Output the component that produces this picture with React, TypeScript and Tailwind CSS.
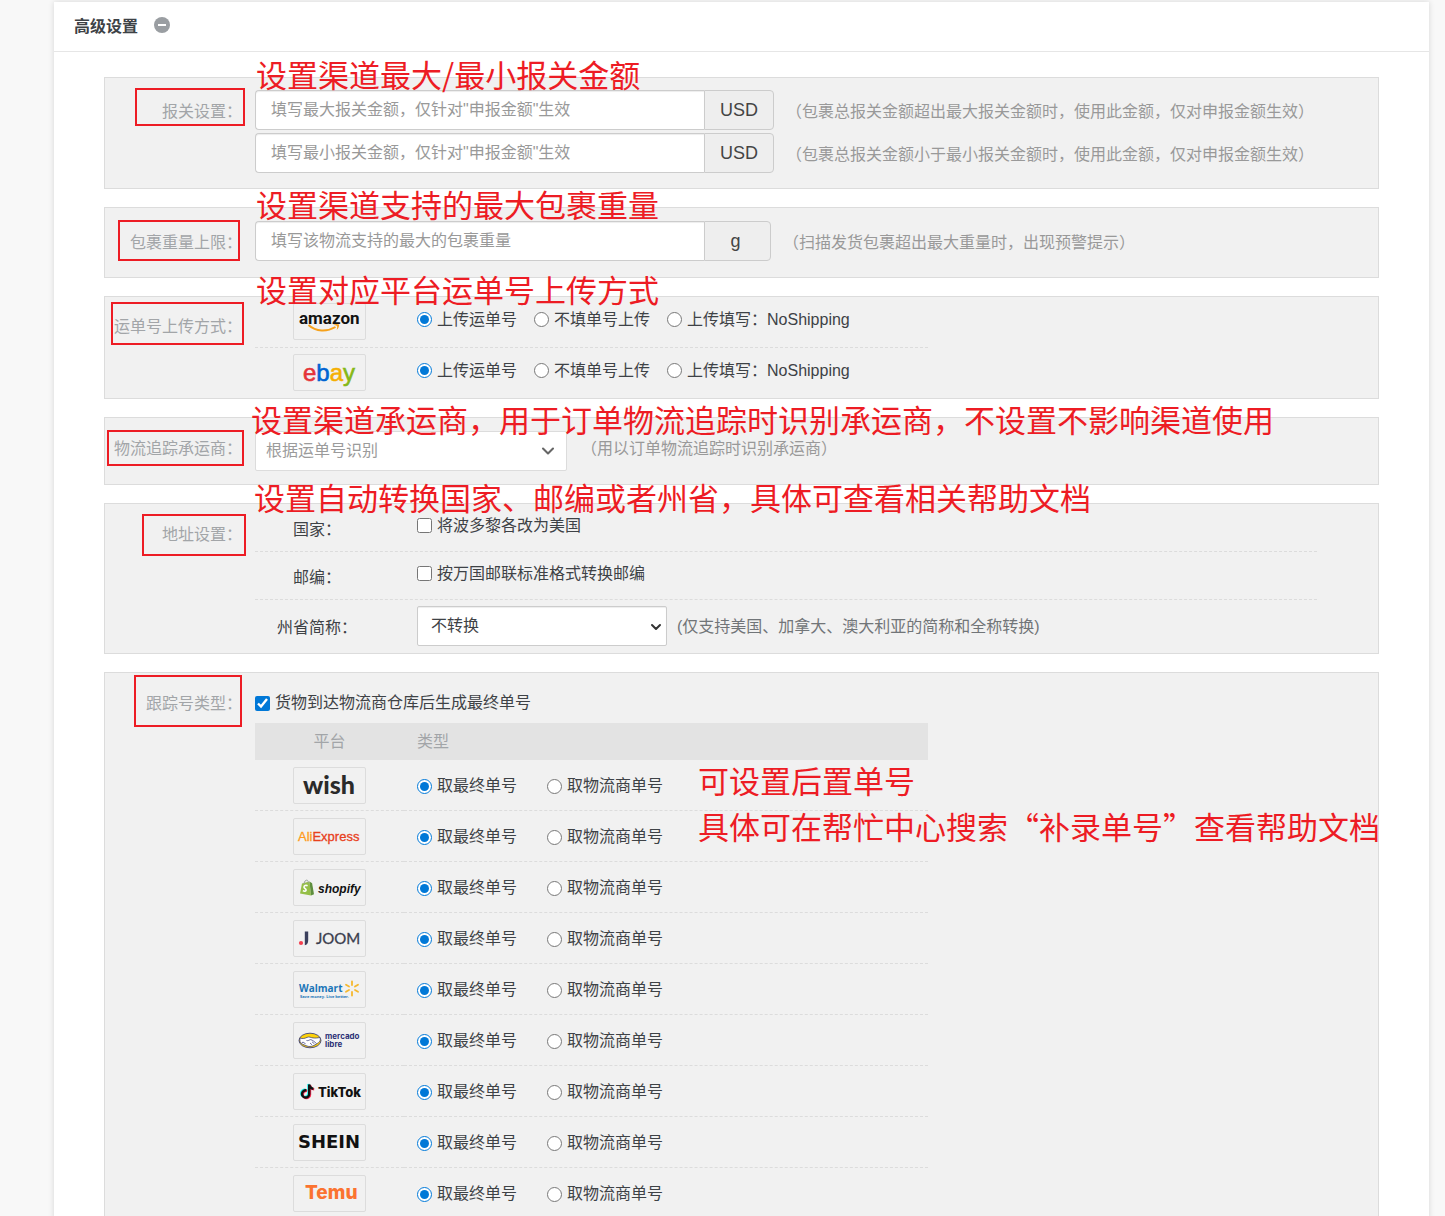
import type { ReactNode } from 'react'
import { ChevronDown } from 'lucide-react'
import { clsx } from 'clsx'

interface SectionProps {
  label: string
  htmlFor?: string
  /** padding above the label, per section */
  labelClass: string
  /** red frame drawn around the label */
  frameClass: string
  noteClass: string
  note: ReactNode
  className?: string
  children: ReactNode
}

function Section({ label, htmlFor, labelClass, frameClass, noteClass, note, className, children }: SectionProps) {
  return (
    <section className={clsx('relative flex gap-[13px] border border-[#dcdcdc] bg-[#f1f1f1]', className)}>
      <div className={clsx('w-[137px] shrink-0 text-right leading-10 text-[#a2a5a8]', labelClass)}>
        {htmlFor ? <label htmlFor={htmlFor}>{label}</label> : <span>{label}</span>}
      </div>
      <div className="min-w-0 flex-1">{children}</div>
      <div className={clsx('pointer-events-none absolute border-2 border-[#ed1c24]', frameClass)} />
      <p
        className={clsx(
          "pointer-events-none absolute z-10 font-['Noto_Sans_CJK_SC',sans-serif] text-[31px] whitespace-nowrap text-[#ed1c24]",
          noteClass
        )}
      >
        {note}
      </p>
    </section>
  )
}

interface AmountFieldProps {
  id: string
  placeholder: string
  unit: string
  unitClass: string
  hint: string
}

function AmountField({ id, placeholder, unit, unitClass, hint }: AmountFieldProps) {
  return (
    <div className="flex items-center">
      <input
        id={id}
        type="text"
        aria-label={placeholder}
        placeholder={placeholder}
        className="h-10 w-[449px] rounded-l border border-r-0 border-[#ccc] bg-white px-[15px] shadow-[inset_0_1px_1px_rgba(0,0,0,0.075)] placeholder:text-[#999]"
      />
      <span
        className={clsx(
          'flex h-10 items-center justify-center rounded-r border border-[#ccc] bg-[#eee] text-lg text-[#444]',
          unitClass
        )}
      >
        {unit}
      </span>
      <span className="ml-3 pt-[3px] whitespace-nowrap text-[#999]">{hint}</span>
    </div>
  )
}

interface ChoiceProps {
  type: 'radio' | 'checkbox'
  name: string
  text: string
  checked?: boolean
}

function Choice({ type, name, text, checked }: ChoiceProps) {
  return (
    <label className="flex items-center gap-[5px] whitespace-nowrap">
      <input type={type} name={name} defaultChecked={checked} className="size-[15px] accent-[#0078d7]" />
      {text}
    </label>
  )
}

function LogoBox({ name, children }: { name: string; children: ReactNode }) {
  return (
    <span className="inline-flex h-[37px] w-[73px] rounded-xs border border-[#dcdcdc]">
      <svg viewBox="0 0 71 35" className="h-[35px] w-[71px]" role="img" aria-label={name}>
        {children}
      </svg>
    </span>
  )
}

const logos: Record<string, ReactNode> = {
  amazon: (
    <>
      <text x="5" y="20" fontFamily="Roboto, sans-serif" fontSize="17" fontWeight="700" fill="#111">
        amazon
      </text>
      <path d="M14.500 21C22 28 33 28 41.500 23" fill="none" stroke="#f6a11b" strokeWidth="2" />
      <path d="M39 20.800c2.500-1 4.800-1 6-.3.4 1.500-.6 4-2.300 5.400.4-1.800.8-3.200.3-3.900-.6-.6-2.500-.8-4-1.200z" fill="#f6a11b" />
    </>
  ),
  ebay: (
    <text x="9" y="26" fontFamily="Liberation Sans, sans-serif" fontSize="24" strokeWidth="0.6">
      <tspan fill="#e53238" stroke="#e53238">e</tspan>
      <tspan fill="#0064d2" stroke="#0064d2">b</tspan>
      <tspan fill="#f5af02" stroke="#f5af02">a</tspan>
      <tspan fill="#86b817" stroke="#86b817">y</tspan>
    </text>
  ),
  wish: (
    <text x="9" y="26" fontFamily="Lato, sans-serif" fontSize="25" fontWeight="900" fill="#2a2a2a">
      wish
    </text>
  ),
  AliExpress: (
    <text x="4" y="22" fontFamily="Liberation Sans, sans-serif" fontSize="13" strokeWidth="0.3">
      <tspan fill="#ff9a1a" stroke="#ff9a1a">Ali</tspan>
      <tspan fill="#e8401c" stroke="#e8401c">Express</tspan>
    </text>
  ),
  shopify: (
    <>
      <path d="M8 13.500L15.500 11.500 17 25.500 6 23.600z" fill="#95bf47" />
      <path d="M15.500 11.500l2.600 1.800L20 24.300l-3 1.200z" fill="#5e8e3e" />
      <path d="M10 14c.3-3 2-4.400 3.300-3.700 1 .5 1 1.800 1 3" fill="none" stroke="#9aa09a" strokeWidth="1" />
      <path d="M13.600 15.800c-1.800-.9-3.700-.2-3.600 1.300.1 1.500 2.300 1.500 2.100 3-.2 1.400-1.800 1.500-3.200.6" fill="none" stroke="#fff" strokeWidth="1.600" />
      <text x="24" y="23" fontFamily="Liberation Sans, sans-serif" fontSize="12" fontWeight="700" fontStyle="italic" fill="#111">
        shopify
      </text>
    </>
  ),
  JOOM: (
    <>
      <circle cx="7" cy="22" r="2.100" fill="#f43f4f" />
      <path d="M10.800 10.500h3.400V19c0 3.200-1.200 5-3.400 5.300z" fill="#3a3f5c" />
      <text x="22" y="23" fontFamily="Lato, sans-serif" fontSize="15" fill="#3a3d4d" stroke="#3a3d4d" strokeWidth="0.3">
        JOOM
      </text>
    </>
  ),
  Walmart: (
    <>
      <text x="5" y="20" fontFamily="Open Sans, sans-serif" fontSize="10" fontWeight="700" fill="#1a75b8">
        Walmart
      </text>
      <text x="6" y="26" fontFamily="Open Sans, sans-serif" fontSize="4" fontWeight="700" fill="#1a75b8">
        Save money. Live better.
      </text>
      <g stroke="#f5b82e" strokeWidth="1.800" strokeLinecap="round">
        <path d="M58 9.500v3.500M58 20v3.500M52 12.800l3 1.700M61 18l3 1.700M52 19.700l3-1.700M61 14.500l3-1.700" />
      </g>
    </>
  ),
  'mercado libre': (
    <>
      <ellipse cx="16" cy="17.500" rx="11" ry="7.300" fill="#fdd20a" stroke="#2d3277" strokeWidth="0.800" />
      <path d="M5.800 15c3 1 5.200.4 7.200-.6 2.400-1 3.800.3 6 .5 2.500.4 4.500 0 7-.4 1 3-.6 5-3.400 6.300-3 2.600-7.600 3.400-9.600 2.200-3.500-1.500-6-2-7-4.500z" fill="#fff" stroke="#2d3277" strokeWidth="0.700" />
      <path d="M12.500 17.500c1.800.6 3-.8 4.200-.9 2 .6 4 2.200 5.800 4M16 20l2 1.800M18 18.800l2.400 2M8 19.500c1.500-.6 2.500.2 3.500 1.500" fill="none" stroke="#2d3277" strokeWidth="0.700" />
      <text x="31" y="16" fontFamily="Inter, sans-serif" fontSize="8" fontWeight="700" fill="#2d3277">
        mercado
      </text>
      <text x="31" y="24" fontFamily="Inter, sans-serif" fontSize="8" fontWeight="700" fill="#2d3277">
        libre
      </text>
    </>
  ),
  TikTok: (
    <>
      <g fill="none" strokeWidth="2.400">
        <path d="M12.400 16.400a3.600 3.600 0 1 0 2.800 3.600V10.500c.4 2.500 2 4 4.200 4.200" stroke="#25f4ee" transform="translate(-.8 -.6)" />
        <path d="M12.400 16.400a3.600 3.600 0 1 0 2.800 3.600V10.500c.4 2.500 2 4 4.200 4.200" stroke="#fe2c55" transform="translate(.8 .6)" />
        <path d="M12.400 16.400a3.600 3.600 0 1 0 2.800 3.600V10.500c.4 2.500 2 4 4.200 4.200" stroke="#111" />
      </g>
      <text x="24" y="23" fontFamily="Inter, sans-serif" fontSize="13" fontWeight="800" fill="#111">
        TikTok
      </text>
    </>
  ),
  SHEIN: (
    <text x="4" y="23" fontFamily="DejaVu Sans, sans-serif" fontSize="18" fontWeight="700" fill="#111">
      SHEIN
    </text>
  ),
  Temu: (
    <text x="11" y="23" fontFamily="Inter, sans-serif" fontSize="19" fontWeight="800" fill="#fb7330">
      Temu
    </text>
  ),
}

const uploadPlatforms = ['amazon', 'ebay']

const trackingPlatforms = [
  'wish',
  'AliExpress',
  'shopify',
  'JOOM',
  'Walmart',
  'mercado libre',
  'TikTok',
  'SHEIN',
  'Temu',
]

export default function App() {
  return (
    <div
      lang="zh-CN"
      className="h-screen overflow-y-auto bg-[#f8f8f8] pt-[2px] pr-4 pl-[54px] font-['Liberation_Sans','Noto_Sans_CJK_SC',sans-serif] text-base text-[#3e4246] [scrollbar-width:none]"
    >
      <main className="min-h-full bg-white shadow-[0_0_6px_rgba(0,0,0,0.14)]">
        <header className="flex h-[50px] items-center gap-4 border-b border-[#e6e6e6] px-5">
          <h1 className="font-bold">高级设置</h1>
          <button type="button" aria-label="收起" className="pb-[3px]">
            <svg viewBox="0 0 16 16" className="size-4">
              <circle cx="8" cy="8" r="8" fill="#9a9ea2" />
              <path d="M4 8h8" stroke="#fff" strokeWidth="2" />
            </svg>
          </button>
        </header>

        <div className="flex flex-col gap-[18px] px-[50px] pt-[25px]">
          {/* 报关设置 */}
          <Section
            label="报关设置："
            htmlFor="declare-max"
            labelClass="pt-[14px]"
            frameClass="top-[10px] left-[30px] h-[38px] w-[110px]"
            noteClass="-top-5 left-[151px] leading-none"
            note="设置渠道最大/最小报关金额"
          >
            <div className="flex flex-col gap-[3px] pt-3 pb-[15px]">
              <AmountField
                id="declare-max"
                placeholder={'填写最大报关金额，仅针对"申报金额"生效'}
                unit="USD"
                unitClass="w-[70px]"
                hint="（包裹总报关金额超出最大报关金额时，使用此金额，仅对申报金额生效）"
              />
              <AmountField
                id="declare-min"
                placeholder={'填写最小报关金额，仅针对"申报金额"生效'}
                unit="USD"
                unitClass="w-[70px]"
                hint="（包裹总报关金额小于最小报关金额时，使用此金额，仅对申报金额生效）"
              />
            </div>
          </Section>

          {/* 包裹重量上限 */}
          <Section
            label="包裹重量上限："
            htmlFor="max-weight"
            labelClass="pt-[15px]"
            frameClass="top-3 left-[13px] h-[41px] w-[122px]"
            noteClass="-top-5 left-[151px] leading-none"
            note="设置渠道支持的最大包裹重量"
          >
            <div className="pt-[13px] pb-4">
              <AmountField
                id="max-weight"
                placeholder="填写该物流支持的最大的包裹重量"
                unit="g"
                unitClass="w-[67px] pr-1"
                hint="（扫描发货包裹超出最大重量时，出现预警提示）"
              />
            </div>
          </Section>

          {/* 运单号上传方式 */}
          <Section
            label="运单号上传方式："
            labelClass="pt-[10px]"
            frameClass="top-[5px] left-[6px] h-[43px] w-[133px]"
            noteClass="-top-6 left-[151px] leading-none"
            note="设置对应平台运单号上传方式"
          >
            <ul className="max-w-[673px]">
              {uploadPlatforms.map((name, idx) => (
                <li
                  key={name}
                  className={clsx('flex pt-[6px] pb-[7px]', idx === 0 && 'border-b border-dashed border-[#dcdcdc]')}
                >
                  <div className="flex w-[149px] justify-center">
                    <LogoBox name={name}>{logos[name]}</LogoBox>
                  </div>
                  <div className="flex items-center gap-[17px] pb-1 pl-[13px]">
                    <Choice type="radio" name={`upload-${name}`} text="上传运单号" checked />
                    <Choice type="radio" name={`upload-${name}`} text="不填单号上传" />
                    <Choice type="radio" name={`upload-${name}`} text="上传填写：NoShipping" />
                  </div>
                </li>
              ))}
            </ul>
          </Section>

          {/* 物流追踪承运商 */}
          <Section
            label="物流追踪承运商："
            htmlFor="carrier"
            labelClass="pt-[11px]"
            frameClass="top-3 left-[2px] h-9 w-[137px]"
            noteClass="-top-[15px] left-[146px] leading-none"
            note="设置渠道承运商，用于订单物流追踪时识别承运商，不设置不影响渠道使用"
          >
            <div className="flex gap-[14px] pt-[13px] pb-[13px]">
              <div className="relative w-[312px]">
                <select
                  id="carrier"
                  className="h-10 w-full appearance-none rounded-xs border border-[#dcdcdc] bg-white px-[10px] text-[#9b9b9b]"
                >
                  <option>根据运单号识别</option>
                </select>
                <ChevronDown className="pointer-events-none absolute top-[10px] right-[9px] size-5 text-[#666]" strokeWidth={2.5} />
              </div>
              <span className="leading-9 text-[#999]">（用以订单物流追踪时识别承运商）</span>
            </div>
          </Section>

          {/* 地址设置 */}
          <Section
            label="地址设置："
            labelClass="pt-[11px]"
            frameClass="top-[10px] left-[37px] h-[42px] w-[104px]"
            noteClass="-top-[23px] left-[149px] leading-none"
            note="设置自动转换国家、邮编或者州省，具体可查看相关帮助文档"
          >
            <div className="mr-[61px]">
              <div className="flex h-12 border-b border-dashed border-[#dcdcdc]">
                <span className="mr-[38px] w-[124px] pt-[2px] text-center leading-[47px]">国家：</span>
                <div className="flex items-center pb-1">
                  <Choice type="checkbox" name="country" text="将波多黎各改为美国" />
                </div>
              </div>
              <div className="flex h-12 border-b border-dashed border-[#dcdcdc]">
                <span className="mr-[38px] w-[124px] pt-[2px] text-center leading-[47px]">邮编：</span>
                <div className="flex items-center pb-1">
                  <Choice type="checkbox" name="postcode" text="按万国邮联标准格式转换邮编" />
                </div>
              </div>
              <div className="flex items-center pt-[6px] pb-[7px]">
                <label htmlFor="state" className="mr-[38px] w-[124px] pt-[3px] text-center">
                  州省简称：
                </label>
                <div className="relative w-[250px]">
                  <select
                    id="state"
                    className="h-10 w-full appearance-none rounded-xs border border-[#ccc] bg-white px-[13px] text-[#3e4246] shadow-[inset_0_1px_1px_rgba(0,0,0,0.075)]"
                  >
                    <option>不转换</option>
                  </select>
                  <ChevronDown className="pointer-events-none absolute top-[13px] right-[3px] size-4 text-[#333]" strokeWidth={3} />
                </div>
                <span className="ml-[10px] pt-[2px] text-[#717578]">(仅支持美国、加拿大、澳大利亚的简称和全称转换)</span>
              </div>
            </div>
          </Section>

          {/* 跟踪号类型 */}
          <Section
            label="跟踪号类型："
            labelClass="pt-[11px]"
            frameClass="top-[2px] left-[29px] h-[52px] w-[108px]"
            noteClass="top-[84px] left-[593px] leading-[46px]"
            note={
              <>
                可设置后置单号
                <br />
                具体可在帮忙中心搜索“补录单号”查看帮助文档
              </>
            }
          >
            <div className="pt-[10px] leading-10">
              <Choice type="checkbox" name="final-number" text="货物到达物流商仓库后生成最终单号" checked />
            </div>
            <table className="w-full max-w-[673px] table-fixed border-separate border-spacing-0">
              <thead>
                <tr className="h-[37px] bg-[#e3e3e3] text-[#a2a5a8]">
                  <th className="w-[149px] p-0 text-center font-normal">平台</th>
                  <th className="p-0 pl-[13px] text-left font-normal">类型</th>
                </tr>
              </thead>
              <tbody>
                {trackingPlatforms.map((name) => (
                  <tr key={name}>
                    <td className="border-b border-dashed border-[#dcdcdc] p-0 pt-[7px] pb-[6px]">
                      <div className="flex justify-center">
                        <LogoBox name={name}>{logos[name]}</LogoBox>
                      </div>
                    </td>
                    <td className="border-b border-dashed border-[#dcdcdc] p-0 pt-[2px] pl-[13px]">
                      <div className="flex gap-[30px]">
                        <Choice type="radio" name={`tracking-${name}`} text="取最终单号" checked />
                        <Choice type="radio" name={`tracking-${name}`} text="取物流商单号" />
                      </div>
                    </td>
                  </tr>
                ))}
              </tbody>
            </table>
          </Section>
        </div>
      </main>
    </div>
  )
}
